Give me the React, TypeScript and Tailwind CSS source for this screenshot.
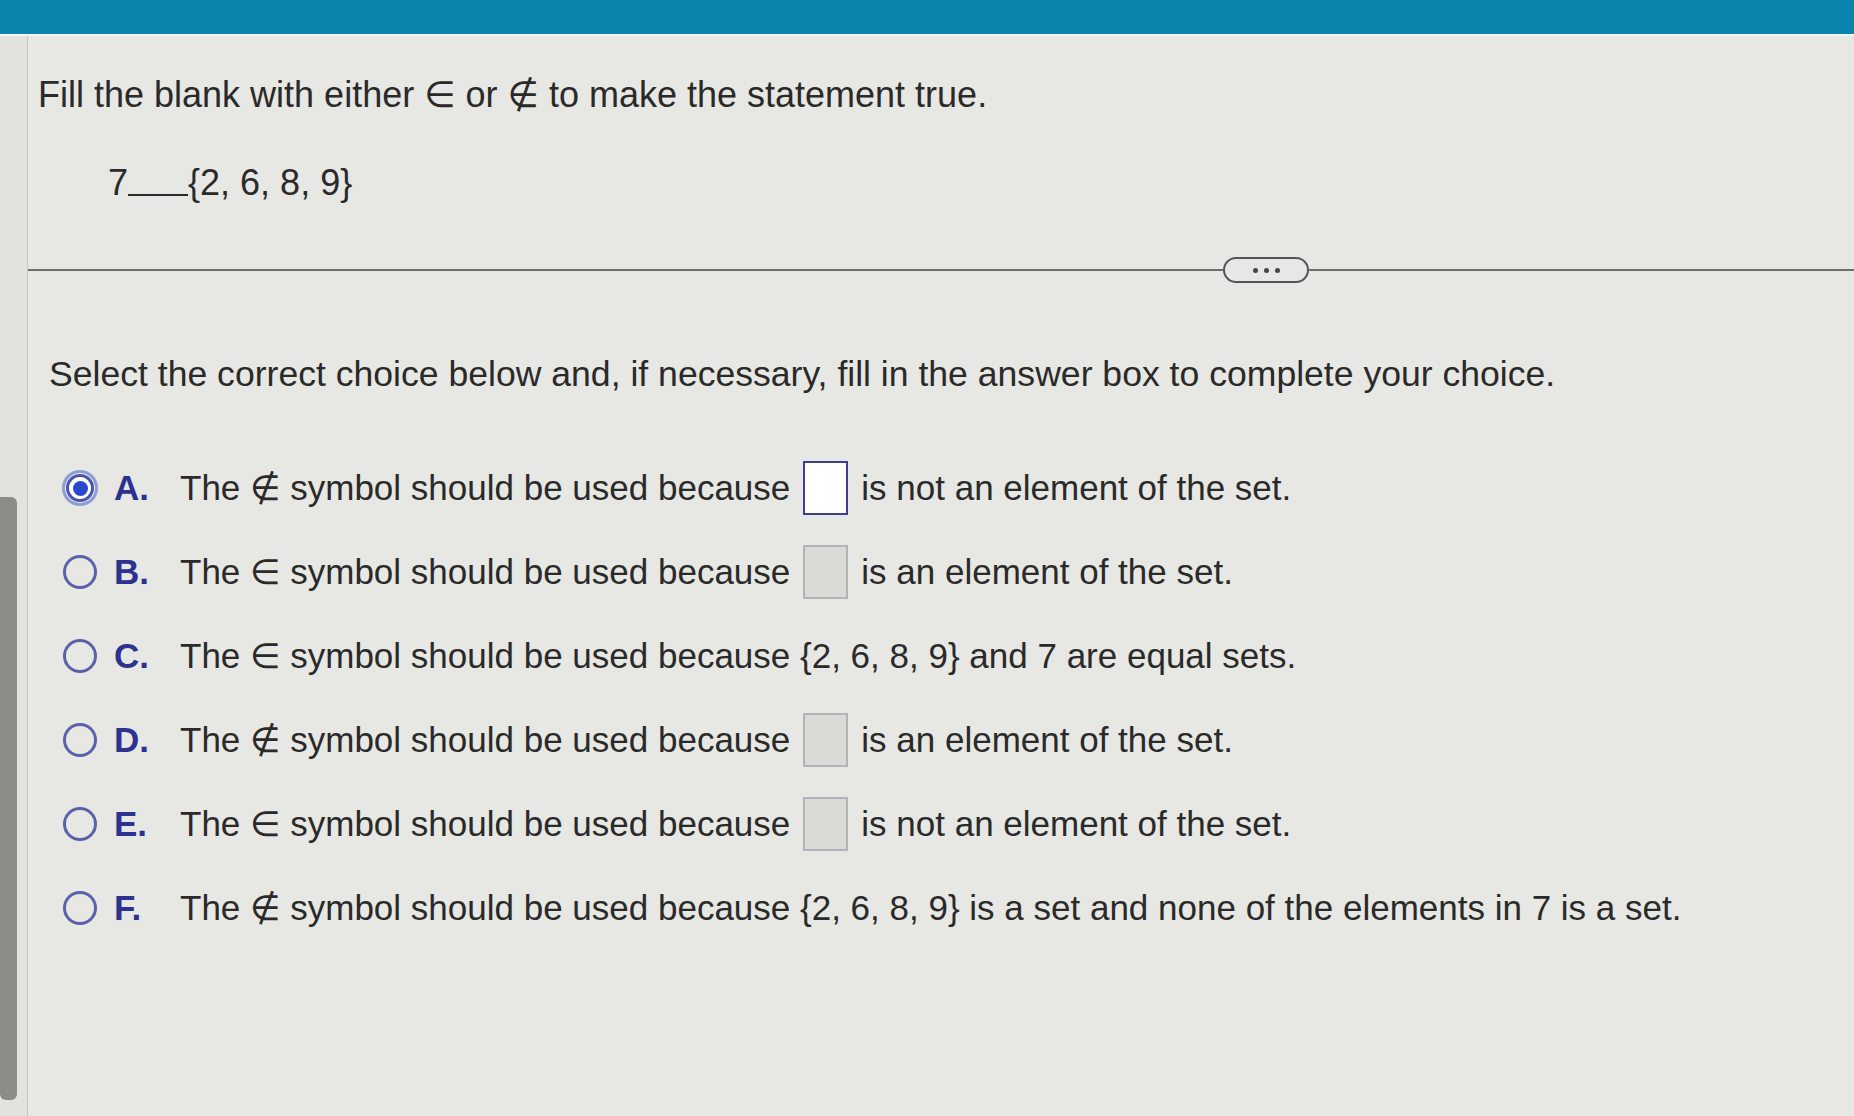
import React from "react";

const font = { fontFamily: '"Liberation Sans", "DejaVu Sans", Arial, sans-serif' };

function Radio({ checked }: { checked?: boolean }) {
  if (checked) {
    return (
      <div className="flex h-[36px] w-[36px] shrink-0 items-center justify-center rounded-full border-[3px] border-[#8d9bd6] bg-[#eef0f8]">
        <div className="flex h-[28px] w-[28px] items-center justify-center rounded-full border-[3px] border-[#4a55a8] bg-white">
          <div className="h-[15px] w-[15px] rounded-full bg-[#2a47d0]" />
        </div>
      </div>
    );
  }
  return <div className="h-[34px] w-[34px] shrink-0 rounded-full border-[3px] border-[#5c62a8]" />;
}

function Box({ active }: { active?: boolean }) {
  return active ? (
    <span className="mx-[13px] inline-block h-[54px] w-[45px] shrink-0 border-2 border-[#3b3f8c] bg-white" />
  ) : (
    <span className="mx-[13px] inline-block h-[54px] w-[45px] shrink-0 border-2 border-[#b0b3b8] bg-[#d9d9d5]" />
  );
}

type Opt = {
  letter: string;
  pre: string;
  post?: string;
  box?: "active" | "idle";
  checked?: boolean;
};

const options: Opt[] = [
  { letter: "A.", pre: "The \u2209 symbol should be used because", box: "active", post: "is not an element of the set.", checked: true },
  { letter: "B.", pre: "The \u2208 symbol should be used because", box: "idle", post: "is an element of the set." },
  { letter: "C.", pre: "The \u2208 symbol should be used because {2, 6, 8, 9} and 7 are equal sets." },
  { letter: "D.", pre: "The \u2209 symbol should be used because", box: "idle", post: "is an element of the set." },
  { letter: "E.", pre: "The \u2208 symbol should be used because", box: "idle", post: "is not an element of the set." },
  { letter: "F.", pre: "The \u2209 symbol should be used because {2, 6, 8, 9} is a set and none of the elements in 7 is a set." },
];

export default function App() {
  return (
    <div className="flex h-[1116px] w-[1854px] flex-col overflow-hidden bg-[#e7e7e3] text-[#2a2a2a]" style={font}>
      <div className="h-[36px] shrink-0 border-b-2 border-[#f4f4f2] bg-[#0a84ad]" />
      <div className="flex flex-1">
        <div className="flex w-[28px] shrink-0 flex-col border-r border-[#c4c4c0] bg-[#e2e2de]">
          <div className="h-[461px]" />
          <div className="h-[603px] w-[17px] rounded-r-[6px] rounded-b-[6px] bg-[#8d8c87]" />
        </div>
        <div className="flex flex-1 flex-col">
          <p className="ml-[10px] mt-[37px] text-[36px] leading-[44px]">
            Fill the blank with either ∈ or ∉ to make the statement true.
          </p>
          <p className="ml-[80px] mt-[44px] flex items-end text-[36px] leading-[44px]">
            <span>7</span>
            <span className="mb-[9px] inline-block w-[60px] border-b-2 border-[#2a2a2a]" />
            <span>{"{2, 6, 8, 9}"}</span>
          </p>
          <div className="mt-[52px] flex h-[26px] items-center">
            <div className="h-[2px] w-[1195px] bg-[#6e6e6c]" />
            <div className="flex h-[26px] w-[86px] items-center justify-center gap-[6px] rounded-full border-2 border-[#555]">
              <span className="h-[5px] w-[5px] rounded-full bg-[#444]" />
              <span className="h-[5px] w-[5px] rounded-full bg-[#444]" />
              <span className="h-[5px] w-[5px] rounded-full bg-[#444]" />
            </div>
            <div className="h-[2px] flex-1 bg-[#6e6e6c]" />
          </div>
          <p className="ml-[21px] mt-[69px] text-[35.6px] leading-[44px]">
            Select the correct choice below and, if necessary, fill in the answer box to complete your choice.
          </p>
          <div className="mt-[50px] flex flex-col">
            {options.map((o) => (
              <div key={o.letter} className="flex h-[84px] items-center text-[35px]">
                <div className="ml-[34px] flex w-[36px] justify-center">
                  <Radio checked={o.checked} />
                </div>
                <span className="ml-[16px] w-[66px] font-bold text-[#2d3290]">{o.letter}</span>
                <span>{o.pre}</span>
                {o.box && <Box active={o.box === "active"} />}
                {o.post && <span>{o.post}</span>}
              </div>
            ))}
          </div>
        </div>
      </div>
    </div>
  );
}
